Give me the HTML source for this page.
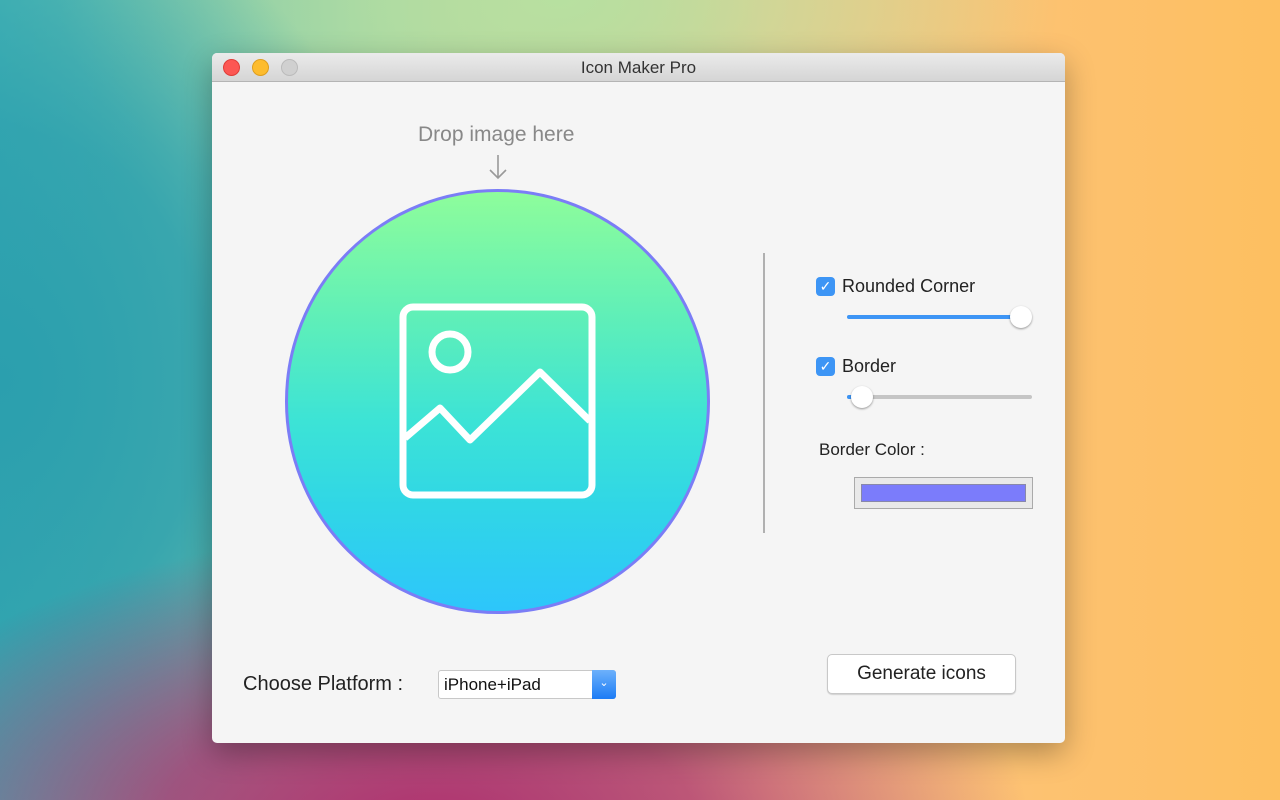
<!DOCTYPE html>
<html><head><style>
*{margin:0;padding:0;box-sizing:border-box}
body{width:1280px;height:800px;overflow:hidden;position:relative;font-family:"Liberation Sans",sans-serif;
background:
radial-gradient(ellipse 600px 300px at 430px 830px,#b0306f 0%,rgba(176,48,111,0.75) 45%,rgba(176,48,111,0) 100%),
radial-gradient(ellipse 420px 500px at 0px 380px,#2b9fae 0%,rgba(43,159,174,0.8) 50%,rgba(43,159,174,0) 100%),
radial-gradient(ellipse 500px 250px at 560px 0px,#b7e0a0 0%,rgba(183,224,160,0) 100%),
linear-gradient(90deg,#4ab7b5 0%,#9fd3a6 30%,#f4c88a 60%,#fdc272 80%,#fdbf60 100%);}
.win{position:absolute;left:212px;top:53px;width:853px;height:690px;background:#f5f5f5;border-radius:5px;overflow:hidden;box-shadow:0 10px 30px rgba(0,0,0,.3)}
.tb{height:29px;background:linear-gradient(#ebebeb,#d5d5d5);border-bottom:1px solid #b4b4b4;text-align:center;font-size:17px;line-height:29px;color:#333}
.dot{position:absolute;top:6px;width:17px;height:17px;border-radius:50%}
.t{position:absolute;color:#222;font-size:18px;white-space:nowrap}
.cb{position:absolute;width:19px;height:19px;border-radius:4px;background:#3d95f5;color:#fff;font-size:14px;text-align:center;line-height:19px}
.knob{position:absolute;width:22px;height:22px;border-radius:50%;background:#fff;box-shadow:0 1px 2px rgba(0,0,0,.4)}
</style></head><body>
<div class="win">
<div class="tb">Icon Maker Pro</div>
<div class="dot" style="left:11px;background:#fc5753;border:1px solid #df3d38"></div>
<div class="dot" style="left:40px;background:#fdbc2e;border:1px solid #de9e1e"></div>
<div class="dot" style="left:69px;background:#d0d0d0;border:1px solid #bbb"></div>
<div class="t" style="left:206px;top:70px;font-size:21px;color:#888">Drop image here</div>
<svg style="position:absolute;left:275px;top:100px" width="22" height="28"><path d="M11 2V25M3 17L11 25L19 17" stroke="#999" stroke-width="1.6" fill="none"/></svg>
<div style="position:absolute;left:73px;top:136px;width:425px;height:425px;border-radius:50%;border:3px solid #7b7df6;background:linear-gradient(#8efd9b 0%,#5fefb8 30%,#3ce3d6 55%,#30d6e6 75%,#2dc6fb 100%)"></div>
<svg style="position:absolute;left:0;top:0" width="853" height="690">
<g transform="translate(-212,-53)" stroke="#fff" stroke-width="7" fill="none" stroke-linejoin="round">
<rect x="403" y="307" width="189" height="188" rx="10"/>
<circle cx="450" cy="352" r="18"/>
<path d="M405 438L440 408L470 440L540 372L590 421"/>
</g>
<line x1="552" y1="200" x2="552" y2="480" stroke="#999" stroke-width="1.5"/>
</svg>
<div class="cb" style="left:604px;top:224px">✓</div>
<div class="t" style="left:630px;top:223px">Rounded Corner</div>
<div style="position:absolute;left:635px;top:262px;width:175px;height:4px;border-radius:2px;background:#3d95f5"></div>
<div class="knob" style="left:798px;top:253px"></div>
<div class="cb" style="left:604px;top:304px">✓</div>
<div class="t" style="left:630px;top:303px">Border</div>
<div style="position:absolute;left:635px;top:342px;width:185px;height:4px;border-radius:2px;background:#c5c5c5"></div>
<div style="position:absolute;left:635px;top:342px;width:10px;height:4px;border-radius:2px;background:#3d95f5"></div>
<div class="knob" style="left:639px;top:333px"></div>
<div class="t" style="left:607px;top:387px;font-size:17px">Border Color :</div>
<div style="position:absolute;left:642px;top:424px;width:179px;height:32px;border:1px solid #aaa;background:#e9e9e9;padding:6px 6px"><div style="height:18px;background:#7b7cfb;border:1px solid #8888aa"></div></div>
<div class="t" style="left:31px;top:620px;font-size:20px">Choose Platform :</div>
<div style="position:absolute;left:226px;top:617px;width:178px;height:29px;border:1px solid #c8c8c8;background:#fff;border-radius:3px">
<div class="t" style="left:5px;top:4px;font-size:17px;color:#111">iPhone+iPad</div>
<div style="position:absolute;right:-1px;top:-1px;width:24px;height:29px;border-radius:0 3px 3px 0;background:linear-gradient(#6db1fb,#1c7cf5);color:#fff;font-size:11px;text-align:center;line-height:27px">⌄</div></div>
<div style="position:absolute;left:615px;top:601px;width:189px;height:40px;background:#fff;border:1px solid #c8c8c8;border-radius:5px;box-shadow:0 1px 1px rgba(0,0,0,.15);text-align:center;line-height:38px;font-size:19px;color:#222">Generate icons</div>
</div>
</body></html>
